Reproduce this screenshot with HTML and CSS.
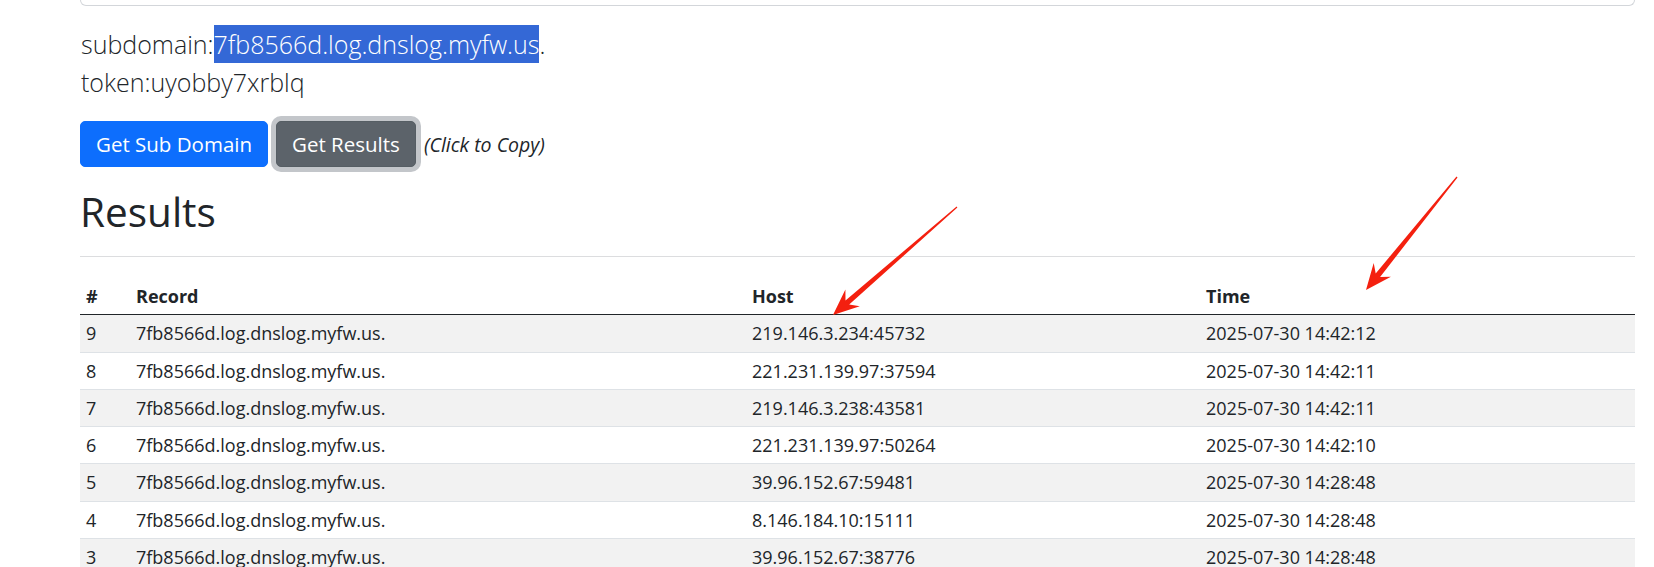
FILE: index.html
```html
<!DOCTYPE html>
<html lang="en">
<head>
<meta charset="utf-8">
<title>DNSLog</title>
<link rel="stylesheet" href="styles.css">
</head>
<body>
<div class="page">
  <div class="topbox"></div>
  <p class="lead">subdomain:<span class="sel">7fb8566d.log.dnslog.myfw.us</span>.<br>token:uyobby7xrblq</p>
  <div class="actions">
    <button class="btn btn-primary" type="button">Get Sub Domain</button>
    <button class="btn btn-secondary focused" type="button">Get Results</button>
    <em class="hint">(Click to Copy)</em>
  </div>
  <h2 class="title">Results</h2>
  <hr class="rule">
  <table class="results">
    <colgroup>
      <col class="c-num"><col class="c-rec"><col class="c-host"><col class="c-time">
    </colgroup>
    <thead>
      <tr><th>#</th><th>Record</th><th>Host</th><th>Time</th></tr>
    </thead>
    <tbody>
      <tr><td>9</td><td>7fb8566d.log.dnslog.myfw.us.</td><td>219.146.3.234:45732</td><td>2025-07-30 14:42:12</td></tr>
      <tr><td>8</td><td>7fb8566d.log.dnslog.myfw.us.</td><td>221.231.139.97:37594</td><td>2025-07-30 14:42:11</td></tr>
      <tr><td>7</td><td>7fb8566d.log.dnslog.myfw.us.</td><td>219.146.3.238:43581</td><td>2025-07-30 14:42:11</td></tr>
      <tr><td>6</td><td>7fb8566d.log.dnslog.myfw.us.</td><td>221.231.139.97:50264</td><td>2025-07-30 14:42:10</td></tr>
      <tr><td>5</td><td>7fb8566d.log.dnslog.myfw.us.</td><td>39.96.152.67:59481</td><td>2025-07-30 14:28:48</td></tr>
      <tr><td>4</td><td>7fb8566d.log.dnslog.myfw.us.</td><td>8.146.184.10:15111</td><td>2025-07-30 14:28:48</td></tr>
      <tr><td>3</td><td>7fb8566d.log.dnslog.myfw.us.</td><td>39.96.152.67:38776</td><td>2025-07-30 14:28:48</td></tr>
    </tbody>
  </table>
</div>
<svg class="annotations" width="1654" height="567" viewBox="0 0 1654 567" aria-hidden="true">
  <polygon class="arrow" points="833,315 859.8,306.2 849.2,304.6 957.4,207.5 956.6,206.5 845.5,300.4 845.4,289.6"/>
  <polygon class="arrow" points="1366,290 1390.9,276.7 1380.1,277 1457.5,177.4 1456.5,176.6 1375.7,273.4 1373.7,262.9"/>
</svg>
</body>
</html>
```

FILE: styles.css
```css
html, body {
  margin: 0;
  padding: 0;
  background: #ffffff;
}

body {
  font-family: "Open Sans", "Noto Sans", "Liberation Sans", sans-serif;
  color: #212529;
  position: relative;
  height: 567px;
  overflow: hidden;
}

.page {
  margin-left: 80px;
  width: 1555px;
}

.topbox {
  height: 5px;
  border: 1px solid #d3d6da;
  border-top: none;
  border-radius: 0 0 7px 7px;
}

.lead {
  margin: 19px 0 0 0;
  font-size: 25px;
  font-weight: 300;
  line-height: 38px;
  padding-left: 1px;
}

.sel {
  background: #3468d6;
  color: #ffffff;
  padding: 2px 0;
}

.actions {
  margin-top: 20px;
  display: flex;
  align-items: center;
  gap: 8px;
}

.btn {
  font-family: inherit;
  font-size: 20.5px;
  line-height: 28px;
  padding: 8px 15px;
  border-radius: 5px;
  border: 1px solid transparent;
  color: #ffffff;
  cursor: pointer;
}

.btn-primary {
  background: #0d6efd;
  border-color: #0d6efd;
}

.btn-secondary {
  background: #5c636a;
  border-color: #565e64;
}

.btn-secondary.focused {
  box-shadow: 0 0 0 5px #c3c6ca;
}

.hint {
  font-size: 19.5px;
  font-style: italic;
}

.title {
  margin: 21px 0 0 0;
  font-size: 40.5px;
  font-weight: 400;
  line-height: 47px;
}

.rule {
  margin: 21px 0 0 0;
  border: 0;
  border-top: 1px solid #dcdddf;
  height: 0;
}

.results {
  margin-top: 21px;
  width: 100%;
  border-collapse: collapse;
  table-layout: fixed;
  font-size: 18px;
}

.c-num { width: 50px; }
.c-rec { width: 616px; }
.c-host { width: 454px; }

.results th,
.results td {
  text-align: left;
  padding: 6px 6px;
  line-height: 24.25px;
  white-space: nowrap;
  border-bottom: 1px solid #dee2e6;
}

.results th {
  font-weight: 700;
  border-bottom: 1px solid #212529;
}

.results tbody tr:nth-child(odd) td {
  background: #f2f2f2;
}

.annotations {
  position: absolute;
  top: 0;
  left: 0;
  pointer-events: none;
}

.arrow {
  fill: #f4200f;
}
```
